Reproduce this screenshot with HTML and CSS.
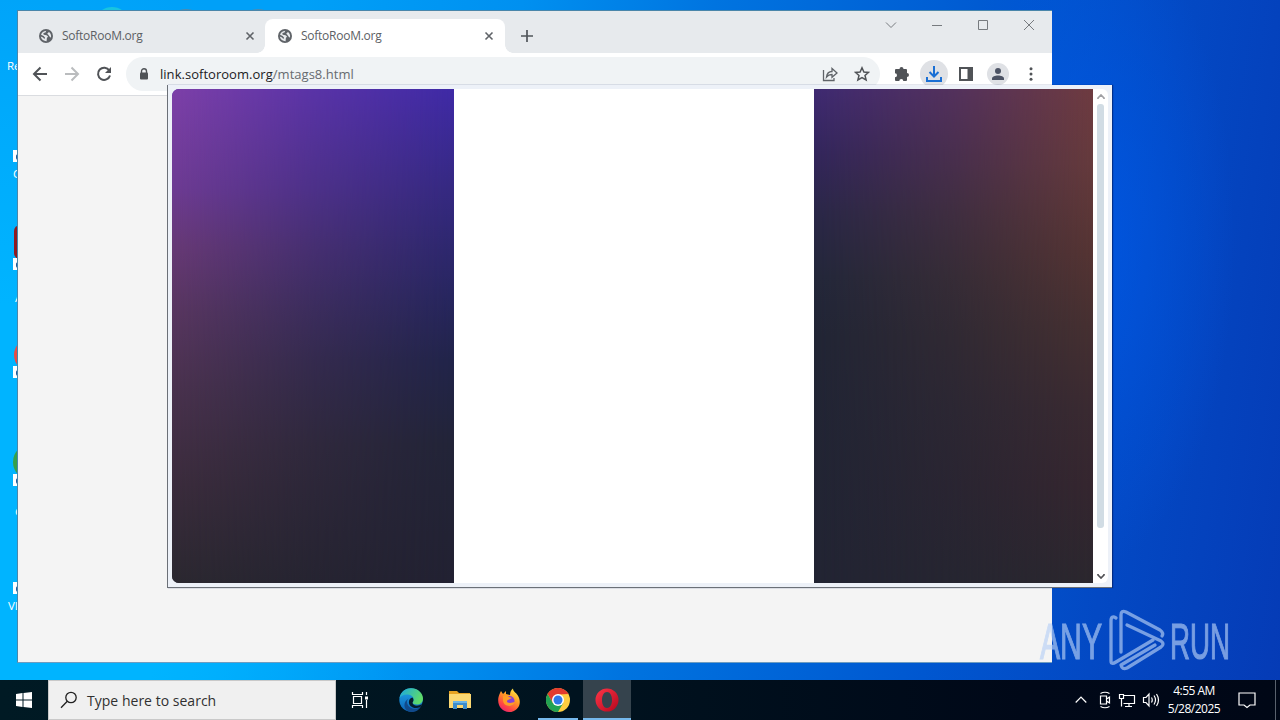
FILE: index.html
```html
<!DOCTYPE html>
<html lang="en">
<head>
  <meta charset="UTF-8">
  <title>Desktop</title>
  <link rel="stylesheet" href="styles.css">
</head>
<body>
  <svg width="0" height="0" class="defs">
    <defs>
      <symbol id="globe" viewBox="0 0 24 24">
        <circle cx="12" cy="12" r="12" fill="#5f6368"/>
        <path d="M12.500 2.800 L11 6 L7.500 7 L8 10 L13 10.500 L15.500 13 L13.500 15.500 L13 20.800 C9 21 4 18.500 3 13 L7 14.500 L9 17 L10.500 15 L8 12 L3.500 10 C4.500 6 8 3 12.500 2.800Z" fill="#e8eaed"/>
        <path d="M17 5 C20 7 21.500 11 20.500 15 L18 13 L16 10 L14 8Z" fill="#e8eaed"/>
      </symbol>
      <symbol id="cross" viewBox="0 0 10 10">
        <path d="M1.500 1.500l7 7M8.500 1.500l-7 7" stroke="#5f6368" stroke-width="1.600"/>
      </symbol>
      <symbol id="shortcut" viewBox="0 0 12 12">
        <rect width="12" height="12" fill="#fff"/>
        <path d="M3 10V6q0-2 3-2V2l5 4-5 3V7Q4 7 3 10Z" fill="#245a9c"/>
      </symbol>
    </defs>
  </svg>

  <div class="desktop">
    <span class="label recycle">Recycle Bin</span>
    <i class="peek teal"></i>
    <i class="peek brown"></i>
    <i class="peek brown second"></i>
    <svg class="shortcut s1"><use href="#shortcut"/></svg>
    <span class="label l1">C</span>
    <i class="app acrobat"></i>
    <svg class="shortcut s2"><use href="#shortcut"/></svg>
    <span class="label l2">A</span>
    <i class="app red"></i>
    <svg class="shortcut s3"><use href="#shortcut"/></svg>
    <i class="app green"></i>
    <svg class="shortcut s4"><use href="#shortcut"/></svg>
    <span class="label l3">G</span>
    <svg class="shortcut s5"><use href="#shortcut"/></svg>
    <span class="label l4">VLC</span>

    <div class="browser">
      <div class="tabs">
        <div class="tab">
          <svg class="favicon"><use href="#globe"/></svg>
          <span class="title">SoftoRooM.org</span>
          <svg class="close"><use href="#cross"/></svg>
        </div>
        <div class="tab active">
          <svg class="favicon"><use href="#globe"/></svg>
          <span class="title">SoftoRooM.org</span>
          <svg class="close"><use href="#cross"/></svg>
        </div>
        <svg class="plus" viewBox="0 0 12 12"><path d="M6 0v12M0 6h12" stroke="#50555a" stroke-width="1.700"/></svg>
        <div class="controls">
          <svg viewBox="0 0 12 12"><path d="M1 3.500l5 5 5-5"/></svg>
          <svg viewBox="0 0 12 12"><path d="M1 6.500h10"/></svg>
          <svg viewBox="0 0 12 12"><path d="M1.500 1.500h9v9h-9z"/></svg>
          <svg viewBox="0 0 12 12"><path d="M1 1l10 10M11 1L1 11"/></svg>
        </div>
      </div>
      <div class="toolbar">
        <svg class="nav" viewBox="0 0 16 16"><path d="M15 8H2M8.500 1.500L2 8l6.500 6.500" fill="none" stroke="#505357" stroke-width="2"/></svg>
        <svg class="nav" viewBox="0 0 16 16"><path d="M1 8h13M7.500 1.500L14 8l-6.500 6.500" fill="none" stroke="#babcbe" stroke-width="2"/></svg>
        <svg class="nav" viewBox="0 0 16 16"><path d="M13.300 4.500A6.100 6.100 0 1 0 14 9.500" fill="none" stroke="#505357" stroke-width="2"/><path d="M15 1v6H9z" fill="#505357"/></svg>
        <div class="address">
          <svg class="lock" viewBox="0 0 10 12"><path d="M2.500 5V3.200a2.500 2.500 0 0 1 5 0V5" fill="none" stroke="#505357" stroke-width="1.400"/><rect x="1" y="4.500" width="8" height="7" rx="1" fill="#505357"/></svg>
          <span class="url"><b>link.softoroom.org</b>/mtags8.html</span>
          <svg class="act" viewBox="0 0 16 16" fill="none" stroke="#5f6368" stroke-width="1.300"><path d="M1.500 4v10.500H12V12M4.500 11C5 7 7.500 5.500 10 5.500V2.500L15 7l-5 4.300V8.500C7.500 8.500 6 9 4.500 11Z"/></svg>
          <svg class="act" viewBox="0 0 16 16"><path d="M8 1.800l1.900 4.200 4.600.4-3.500 3 1.100 4.500L8 11.500l-4.100 2.400L5 9.400l-3.500-3 4.600-.4Z" fill="none" stroke="#505357" stroke-width="1.500"/></svg>
        </div>
        <div class="tools">
          <svg class="tool" viewBox="0 0 16 16"><path d="M1 4q0-1 1-1h3.500a2 2 0 0 1 4 0H12q1 0 1 1v3a2 2 0 0 1 0 4v3q0 1-1 1H9.300a2 2 0 0 0-4 0H2q-1 0-1-1v-2.800a2 2 0 0 0 0-4Z" fill="#505357"/></svg>
          <span class="round download"><svg class="big" viewBox="0 0 18 18"><path d="M9 1v10M4.500 7L9 11.500 13.500 7M2 12v4h14v-4" fill="none" stroke="#1a6fd4" stroke-width="2"/></svg></span>
          <svg class="tool" viewBox="0 0 16 16"><path d="M2 2h12v12H2z" fill="none" stroke="#505357" stroke-width="2"/><path d="M9.500 1H15v14H9.500z" fill="#505357"/></svg>
          <span class="round profile"><svg viewBox="0 0 14 14"><circle cx="7" cy="4" r="3" fill="#4c5364"/><path d="M1 13v-1.500C1 9.500 4 8.500 7 8.500s6 1 6 3V13Z" fill="#4c5364"/></svg></span>
          <svg class="tool" viewBox="0 0 16 16" fill="#505357"><circle cx="8" cy="2.700" r="1.500"/><circle cx="8" cy="8" r="1.500"/><circle cx="8" cy="13.300" r="1.500"/></svg>
        </div>
      </div>
      <div class="page"></div>
    </div>

    <div class="popup">
      <div class="content">
        <div class="shade left"></div>
        <div class="blank"></div>
        <div class="shade right"></div>
      </div>
      <div class="scrollbar">
        <svg viewBox="0 0 8 6"><path d="M1 5V4l3-3 3 3v1" fill="none" stroke="#a0a0a4" stroke-width="1.700"/></svg>
        <div class="track"><div class="thumb"></div></div>
        <svg viewBox="0 0 8 6"><path d="M1 1v1l3 3 3-3V1" fill="none" stroke="#505054" stroke-width="1.700"/></svg>
      </div>
    </div>

    <svg class="watermark" width="220" height="66" viewBox="0 0 220 66">
      <g class="words">
        <text x="1" y="50.500" textLength="62" lengthAdjust="spacingAndGlyphs">ANY</text>
        <text x="131" y="50.500" textLength="60" lengthAdjust="spacingAndGlyphs">RUN</text>
      </g>
      <g fill="none" stroke-width="3.300" stroke-linejoin="round" stroke-linecap="round">
        <path d="M77 10Q72 7 72 13V53Q72 57 77 54L114 32"/>
        <path d="M82 44V7Q82 2 87 4L121 22Q125 25 123 28"/>
        <path d="M88 17L122 33Q126 36 122 39L88 60Q83 62 82 57L116 37"/>
      </g>
    </svg>
  </div>

  <div class="taskbar">
    <div class="start"><svg width="16" height="16" viewBox="0 0 16 16" fill="#fff"><path d="M0 2l6.500-1v6.500H0zM7.500.9L16 0v7.500H7.500zM0 8.500h6.500V15L0 14zM7.500 8.500H16V16l-8.500-1z"/></svg></div>
    <div class="search">
      <svg width="18" height="18" viewBox="0 0 18 18" fill="none" stroke="#202020" stroke-width="1.300"><circle cx="11" cy="6.500" r="5.200"/><path d="M7.300 10.300L1 16.700"/></svg>
      <span>Type here to search</span>
    </div>
    <div class="item"><svg width="18" height="18" viewBox="0 0 18 18" fill="none" stroke="#fff" stroke-width="1.200"><path d="M1.500 1v2.500h10V1M1.500 17v-2.500h10V17M2.500 5.500h8v7h-8zM15.500 1v3M15.500 9v8"/><path d="M14 5.500h3v3h-3z" fill="#fff" stroke="none"/></svg></div>
    <div class="item edge">
      <svg width="24" height="24" viewBox="0 0 24 24">
        <defs>
          <linearGradient id="eg" x1="0" y1="0" x2="1" y2=".4"><stop offset="0" stop-color="#19a6e3"/><stop offset="1" stop-color="#5edb6a"/></linearGradient>
          <linearGradient id="eb" x1="0" y1="0" x2="0" y2="1"><stop offset="0" stop-color="#1fa6e8"/><stop offset="1" stop-color="#0c63b8"/></linearGradient>
        </defs>
        <circle cx="12" cy="12" r="11.700" fill="url(#eb)"/>
        <path d="M.5 10C2 3 7 .2 12 .2c7 0 12 5 12 10.300 0 4-3 6-6 6-3 0-4.500-1-4.500-2 0-.8 1.500-1.500 1-4C14 8 11 6.500 8 6.500 4.500 6.500 2 8 .5 10Z" fill="url(#eg)"/>
        <path d="M9.500 10.500c-3 3-1 9 4 10 3 .8 6 0 8.500-2-3 5-8 6.500-12 5C4 21 4 14 9.500 10.500Z" fill="#114a8b"/>
        <path d="M13.500 14.500c0 3 5 4.500 9.500 1.500l-1.500 3C15 22 9 18 10 13q.5-3 3.500-3.500 2 2.500 0 5Z" fill="#061c2c"/>
      </svg>
    </div>
    <div class="item">
      <svg width="22" height="20" viewBox="0 0 22 20"><path d="M0 1h8l2 2h11v4H0Z" fill="#e6a323"/><path d="M0 4h22v14H0Z" fill="#fbd872"/><path d="M4 11h14v8h-4v-4H8v4H4Z" fill="#3c8dcc"/><path d="M4 11h14v2H4Z" fill="#69b5e8"/></svg>
    </div>
    <div class="item">
      <svg width="24" height="24" viewBox="0 0 24 24">
        <defs><linearGradient id="ff" x1=".8" y1="0" x2=".2" y2="1"><stop offset="0" stop-color="#fff04a"/><stop offset=".4" stop-color="#ff9a25"/><stop offset=".75" stop-color="#ff4545"/><stop offset="1" stop-color="#e51e72"/></linearGradient></defs>
        <path d="M3 5L4 3l2 3 3-3v3l4 1c0-3 1-5 3-6.500 0 3 3 4 4.500 6.500C26 15 21 24 12 24 4 24-2 15 3 5Z" fill="url(#ff)"/>
        <circle cx="12.500" cy="13" r="5" fill="#8541d8"/>
        <path d="M6 8q4-2 6 1l3 1-4 2c-2 1-1 3 2 3 2 0 3-1 5-1-2 6-12 5-12-2Z" fill="#ff9d25"/>
      </svg>
    </div>
    <div class="item open">
      <svg width="24" height="24" viewBox="0 0 24 24"><circle cx="12" cy="12" r="12" fill="#ffcd40"/><path d="M1.600 6A12 12 0 0 1 22.400 6L12 6.600 6.800 15Z" fill="#e33b2e"/><path d="M1.600 6A12 12 0 0 0 12 24l5.200-9H6.800Z" fill="#22a253"/><circle cx="12" cy="12" r="6" fill="#fff"/><circle cx="12" cy="12" r="4.500" fill="#2f78e8"/></svg>
    </div>
    <div class="item open current">
      <svg width="24" height="24" viewBox="0 0 24 24">
        <defs><linearGradient id="op" x1="0" y1="0" x2="1" y2="1"><stop offset="0" stop-color="#ff3648"/><stop offset="1" stop-color="#b4061c"/></linearGradient></defs>
        <path fill="url(#op)" fill-rule="evenodd" d="M12 .5a11.500 11.500 0 1 0 0 23 11.500 11.500 0 1 0 0-23Zm0 3.500c3 0 5 3.500 5 8s-2 8-5 8-5-3.500-5-8 2-8 5-8Z"/>
      </svg>
    </div>
    <div class="tray">
      <svg width="12" height="18" viewBox="0 0 12 18"><path d="M.7 11.500L6 6l5.300 5.500"/></svg>
      <svg width="14" height="18" viewBox="0 0 14 18"><path d="M2.500 2.500q4.500-2.500 9 0M2.500 15.500q4.500 2.500 9 0M2.500 5h6v8h-6zM8.500 8l3-2v6l-3-2"/></svg>
      <svg width="18" height="18" viewBox="0 0 18 18"><path d="M6 4.500h10.500v8H5.500M11 12.500V15M7 15.500h7M1.500 3.500h4v4h-4zM3.500 7.500v8"/></svg>
      <svg width="18" height="18" viewBox="0 0 18 18"><path d="M1.500 6.500h2.500l3-3.500v12l-3-3.500H1.500zM9.500 6.500q1.500 2.500 0 5M12 4.500q3 4.500 0 9M14.500 3q4 6 0 12"/></svg>
    </div>
    <div class="clock"><span>4:55 AM</span><span>5/28/2025</span></div>
    <svg class="notify" width="18" height="18" viewBox="0 0 18 18"><path d="M1 2h16v12h-5l-3 2.500L6 14H1z" fill="none" stroke="#fff" stroke-width="1.200"/></svg>
    <div class="peek-line"></div>
  </div>
</body>
</html>
```

FILE: styles.css
```css
* { box-sizing: border-box; }
body { margin: 0; width: 1280px; height: 720px; overflow: hidden; font-family: "Open Sans", "Noto Sans", sans-serif; font-size: 12px; }
svg { display: block; flex: none; }
.defs { position: absolute; }

.desktop {
  position: relative; height: 680px; overflow: hidden;
  background:
    radial-gradient(ellipse 150px 330px at 1085px 240px, rgba(0, 88, 230, .8), transparent),
    radial-gradient(ellipse 420px 640px at 0 560px, #00b4ff 40%, transparent),
    linear-gradient(98deg, #00a0f8 0, #00a0f8 22%, #0090f0 38%, #0074e0 52%, #0057d0 74%, #0349c4 86%, #053bb6 100%);
}
.label { position: absolute; color: #fff; white-space: nowrap; line-height: 16px; font-size: 11.5px; }
.recycle { left: 7px; top: 58px; }
.l1 { left: 13px; top: 166px; }
.l2 { left: 15px; top: 290px; }
.l3 { left: 15px; top: 504px; }
.l4 { left: 8px; top: 598px; }
.shortcut { position: absolute; left: 13px; width: 12px; height: 12px; }
.s1 { top: 150px; }
.s2 { top: 258px; }
.s3 { top: 366px; }
.s4 { top: 474px; }
.s5 { top: 582px; }
.app { position: absolute; }
.acrobat { left: 14px; top: 225px; width: 30px; height: 34px; border-radius: 6px; background: #8f1a20; }
.red { left: 14px; top: 338px; width: 34px; height: 34px; border-radius: 50%; background: #e94b43; }
.green { left: 13px; top: 444px; width: 36px; height: 36px; border-radius: 50%; background: #35a04b; }
.peek { position: absolute; left: 98px; top: 7px; width: 28px; height: 20px; border-radius: 50%; background: #18c4e0; }
.brown { left: 172px; top: 9px; background: #4c8bb0; }
.second { left: 244px; }

.browser { position: absolute; left: 17px; top: 10px; width: 1035px; height: 653px; border: 1px solid #4a86aa; border-right: 0; border-bottom-color: #6d9cc0; background: #f4f4f4; }
.tabs { display: flex; height: 42px; padding: 8px 0 0 8px; background: #e7eaed; }
.tab { display: flex; align-items: center; width: 239px; height: 34px; padding: 0 9px 0 13px; color: #5c6064; }
.active { position: relative; width: 240px; background: #fff; border-radius: 8px 8px 0 0; }
.active::before, .active::after { content: ""; position: absolute; bottom: 0; width: 8px; height: 8px; }
.active::before { left: -8px; background: radial-gradient(circle at 0 0, transparent 7.5px, #fff 8px); }
.active::after { right: -8px; background: radial-gradient(circle at 100% 0, transparent 7.5px, #fff 8px); }
.favicon { width: 14px; height: 14px; }
.title { flex: 1; margin: -1px 0 0 9px; letter-spacing: -.25px; }
.close { width: 10px; height: 10px; margin-right: 2px; }
.tab:not(.active) .close { margin-right: 1px; }
.plus { width: 12px; height: 12px; margin: 11px 0 0 16px; }
.controls { display: flex; gap: 34px; margin: 0 17px 0 auto; }
.controls svg { width: 12px; height: 12px; fill: none; stroke: #777b7f; stroke-width: 1; }
.toolbar { display: flex; align-items: center; height: 43px; padding-left: 14px; background: #fff; border-bottom: 1px solid #dadce0; }
.nav { width: 16px; height: 16px; margin-right: 16px; }
.nav:nth-child(3) { margin-right: 14px; }
.address { display: flex; align-items: center; width: 754px; height: 34px; padding: 0 10px 0 13px; border-radius: 17px; background: #f0f3f5; }
.lock { width: 10px; height: 12px; }
.url { flex: 1; margin-left: 11px; color: #676b70; font-size: 13px; letter-spacing: .03px; }
.url b { color: #202124; font-weight: 400; }
.act { width: 16px; height: 16px; margin-left: 16px; }
.tools { display: flex; align-items: center; margin-left: 14px; }
.tool { width: 16px; height: 16px; }
.round { display: flex; align-items: center; justify-content: center; border-radius: 50%; background: #dfe1e5; }
.download { width: 28px; height: 28px; margin: 0 10px; }
.big { width: 18px; height: 18px; }
.profile { width: 22px; height: 22px; margin: 0 14px 0 13px; }
.profile svg { width: 14px; height: 14px; }

.popup { position: absolute; left: 167px; top: 85px; width: 945px; height: 503px; display: flex; padding: 4px; background: #edf1f8; border: solid #6b7077; border-width: 0 0 1px 1px; box-shadow: 1px 0 1px rgba(0, 25, 90, .6); }
.content { display: flex; width: 921px; height: 494px; border-radius: 7px 0 0 7px; overflow: hidden; }
.shade { height: 100%; }
.shade::before { content: ""; display: block; height: 100%; }
.left { width: 282px; background: linear-gradient(#3f2aa6, #352982 20%, #27265f 42%, #21244a 55%, #222438 72%, #222132); }
.left::before { background: linear-gradient(#7d40a8, #6d3b92 20%, #673975 32%, #58365f 45%, #4a324e 60%, #3b2c3c 80%, #2b2830); -webkit-mask: linear-gradient(90deg, #000, rgba(0, 0, 0, .43) 50%, transparent); }
.blank { width: 360px; background: #fff; }
.right { flex: 1; background: linear-gradient(#3f2a72, #33265c 13%, #2a2748 25%, #23273a 38%, #212535 50%, #222433); }
.right::before { background: linear-gradient(#6e3b40, #653a3c 15%, #553433 33%, #463031 48%, #3a2a31 65%, #35262f 80%, #2b272e); -webkit-mask: linear-gradient(270deg, #000, rgba(0, 0, 0, .43) 50%, transparent); }
.scrollbar { display: flex; flex-direction: column; align-items: center; width: 15px; padding: 5px 0 4px; background: #fff; border-radius: 0 6px 6px 0; }
.scrollbar svg { width: 8px; height: 6px; }
.track { flex: 1; padding-top: 4px; }
.thumb { width: 7px; height: 424px; border-radius: 3px; background: #d1dce4; }

.watermark { position: absolute; left: 1039px; top: 608px; opacity: .65; fill: #b7d0f6; stroke: #b7d0f6; }
.words { font: 50px "Liberation Sans Narrow", "Liberation Sans", sans-serif; stroke-width: 1.2; }

.taskbar { display: flex; height: 40px; background: linear-gradient(90deg, #001a24, #00131f 45%, #000818 80%, #000716); color: #fff; }
.start { display: flex; align-items: center; justify-content: center; width: 48px; }
.search { display: flex; align-items: center; width: 288px; padding-left: 11px; background: #f0f0f0; border: 1px solid #c9c9c9; color: #303030; font-size: 14px; }
.search span { margin-left: 9px; letter-spacing: .02px; }
.item { display: flex; align-items: center; justify-content: center; width: 49px; border-bottom: 2px solid transparent; padding-top: 2px; }
.search + .item { width: 48px; }
.edge { margin-left: 2px; }
.open { width: 40px; margin: 0 5px; border-color: #76b9ed; }
.current { width: 48px; margin: 0; background: #35434d; }
.tray { display: flex; align-items: center; gap: 6px; margin-left: auto; }
.tray svg { fill: none; stroke: #fff; stroke-width: 1.2; }
.tray svg:first-child { margin-right: 5px; }
.clock { display: flex; flex-direction: column; align-items: center; width: 68px; padding-top: 2px; line-height: 18px; letter-spacing: -.5px; }
.notify { margin: 11px 19px 0 10px; }
.peek-line { width: 5px; border-left: 1px solid #59616d; }
```
